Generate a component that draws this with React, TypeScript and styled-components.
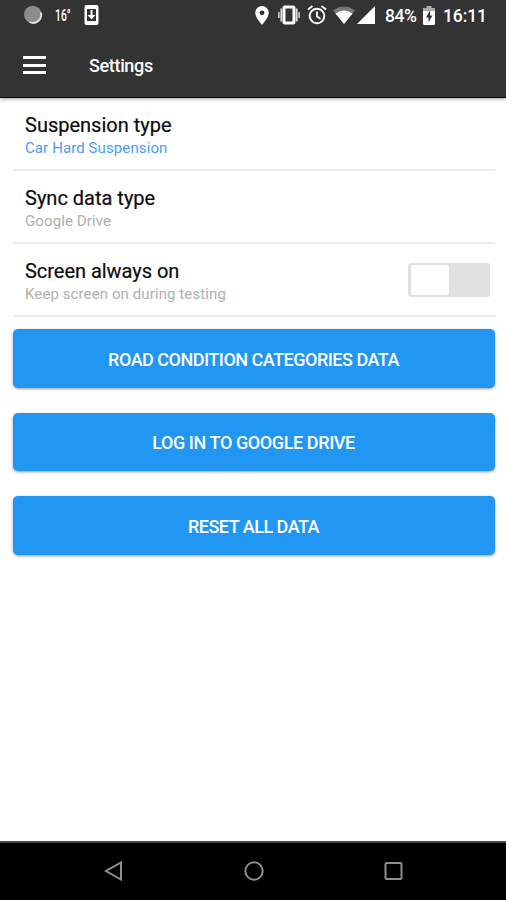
import React from "react";
import styled, { createGlobalStyle } from "styled-components";

const GlobalStyle = createGlobalStyle`
  * { box-sizing: border-box; }
  body { margin: 0; background: #fff; font-family: Roboto, "Liberation Sans", sans-serif; }
`;

const Screen = styled.div`
  width: 506px;
  height: 900px;
  display: flex;
  flex-direction: column;
  background: #fff;
  overflow: hidden;
`;

const TopArea = styled.header`
  flex: none;
  height: 98px;
  background: #333;
  border-bottom: 1.5px solid #0c0c0c;
  box-shadow: 0 1px 4px rgba(0, 0, 0, 0.4);
`;

const StatusBar = styled.div`
  height: 32px;
  display: flex;
  align-items: center;
  justify-content: space-between;
  padding: 0 19px 0 24px;
  color: #fff;
`;

const StatusGroup = styled.div`
  display: flex;
  align-items: center;
  height: 32px;
`;

const StatusIcon = styled.svg<{ $gap?: number }>`
  display: block;
  flex: none;
  margin-bottom: 2px;
  margin-right: ${(p) => p.$gap ?? 0}px;
`;

const Temperature = styled.span`
  width: 16px;
  margin: 0 13px 0 12px;
  font-size: 16px;
  line-height: 32px;
  font-weight: 500;
  white-space: nowrap;
  transform: scaleX(0.65);
  transform-origin: 0 50%;
`;

const StatusText = styled.span<{ $width: number; $spacing: number }>`
  width: ${(p) => p.$width}px;
  font-size: 17.5px;
  line-height: 32px;
  font-weight: 500;
  letter-spacing: ${(p) => p.$spacing}px;
  white-space: nowrap;
`;

const AppBar = styled.div`
  height: 64px;
  display: flex;
  align-items: center;
  padding: 2px 23px 0;
`;

const MenuButton = styled.button`
  width: 23px;
  height: 18px;
  padding: 0;
  border: 0;
  background: none;
  display: flex;
  flex-direction: column;
  justify-content: space-between;
`;

const MenuBar = styled.span`
  height: 3px;
  background: #fff;
`;

const Title = styled.h1`
  margin: 1px 0 0 43px;
  color: #fff;
  font-size: 18px;
  font-weight: 500;
  line-height: 24px;
  letter-spacing: -0.35px;
`;

const Content = styled.main`
  flex: 1;
  padding: 0 11.5px 0 12.5px;
`;

const Row = styled.div<{ $height: number }>`
  height: ${(p) => p.$height}px;
  display: flex;
  align-items: center;
  justify-content: space-between;
  padding: 4px 4.5px 0 12.5px;
  border-bottom: 2px solid #ebebeb;
`;

const RowTitle = styled.div<{ $spacing: number }>`
  font-size: 20px;
  line-height: 24px;
  letter-spacing: ${(p) => p.$spacing}px;
  color: #0c0c0c;
  -webkit-text-stroke: 0.2px #0c0c0c;
`;

const RowValue = styled.div<{ $accent?: boolean; $spacing: number }>`
  font-size: 15px;
  line-height: 22px;
  letter-spacing: ${(p) => p.$spacing}px;
  color: ${(p) => (p.$accent ? "#4a9df0" : "#b0b0b0")};
`;

const Switch = styled.div`
  width: 82px;
  height: 34px;
  padding: 2px 3px;
  margin-top: -3px;
  border-radius: 3px;
  background: #e0e0e0;
`;

const Thumb = styled.div`
  width: 38px;
  height: 30px;
  border-radius: 2px;
  background: #fff;
`;

const Actions = styled.div`
  display: flex;
  flex-direction: column;
  gap: 25px;
  padding-top: 12px;
`;

const ActionButton = styled.button<{ $spacing: number }>`
  width: 482px;
  height: 58.5px;
  padding: 2px 0 0;
  border: 0;
  border-radius: 5px;
  background: #2196f3;
  box-shadow: 0 1px 3px rgba(0, 0, 0, 0.4);
  color: #fff;
  font-family: inherit;
  font-size: 18px;
  font-weight: 500;
  letter-spacing: ${(p) => p.$spacing}px;
`;

const NavBar = styled.nav`
  flex: none;
  height: 59px;
  display: flex;
  justify-content: space-between;
  align-items: center;
  padding: 0 103px 2px 104px;
  background: #000;
  border-top: 2px solid #484848;
`;

function DiscIcon() {
  return (
    <StatusIcon width="19" height="20" viewBox="0 0 19 20" $gap={0}>
      <circle cx="8.8" cy="9.5" r="8.8" fill="#8c8c8c" />
      <path d="M16.8 7.5A8 8 0 0 1 5.5 17" fill="none" stroke="#e4e4e4" strokeWidth="1.8" />
    </StatusIcon>
  );
}

function DownloadIcon() {
  return (
    <StatusIcon width="16" height="20" viewBox="0 0 16 20">
      <rect x=".5" width="14" height="20" rx="2" fill="#fff" />
      <path d="M3 4h9v12H3z" fill="#333" />
      <path d="M6.5 5h2v5h3l-4 4.5-4-4.5h3z" fill="#fff" />
    </StatusIcon>
  );
}

function PinIcon() {
  return (
    <StatusIcon width="14" height="19" viewBox="0 0 14 19" $gap={9}>
      <path d="M7 0a6.8 6.8 0 0 0-6.8 6.8C.2 11.5 7 19 7 19s6.8-7.5 6.8-12.2A6.8 6.8 0 0 0 7 0zm0 4.4a2.4 2.4 0 1 1 0 4.8 2.4 2.4 0 0 1 0-4.8z" fill="#fff" fillRule="evenodd" />
    </StatusIcon>
  );
}

function VibrateIcon() {
  return (
    <StatusIcon width="22" height="20" viewBox="0 0 22 20" $gap={7}>
      <rect x="6" y="2" width="10" height="16" rx="1" fill="none" stroke="#fff" strokeWidth="3" />
      <path d="M3.3 3.5v13M18.7 3.5v13" stroke="#ddd" strokeWidth="1.8" />
      <path d="M.9 7v6M21.1 7v6" stroke="#ccc" strokeWidth="1.6" />
    </StatusIcon>
  );
}

function AlarmIcon() {
  return (
    <StatusIcon width="20" height="20" viewBox="0 0 20 20" $gap={6}>
      <circle cx="10" cy="11" r="7.3" fill="none" stroke="#fff" strokeWidth="2" />
      <path d="M10 6.5v5l3.5 2.2M1 4.5 5.5 1M19 4.5 14.5 1" fill="none" stroke="#fff" strokeWidth="1.8" />
    </StatusIcon>
  );
}

function WifiIcon() {
  return (
    <StatusIcon width="22" height="18" viewBox="0 0 22 18" $gap={2}>
      <path d="M0 4.5Q11-3.5 22 4.5L11 18z" fill="#777" />
      <path d="M2.5 7.500Q11 1.500 19.500 7.500L11 18z" fill="#fff" />
    </StatusIcon>
  );
}

function SignalIcon() {
  return (
    <StatusIcon width="18" height="18" viewBox="0 0 18 18" $gap={10}>
      <path d="M18 0v18H0z" fill="#fff" />
    </StatusIcon>
  );
}

function BatteryIcon() {
  return (
    <StatusIcon width="12" height="19" viewBox="0 0 12 19" $gap={8}>
      <path d="M3.5 0h5v2H12v5H0V2h3.5z" fill="#aaa" />
      <path d="M0 5h12v12.500q0 1.500-1.500 1.500h-9Q0 19 0 17.500z" fill="#fff" />
      <path d="M7 4.500 3 11.500h2.500V16.500L9.500 9.500H7z" fill="#333" />
    </StatusIcon>
  );
}

const actions = [
  { label: "ROAD CONDITION CATEGORIES DATA", spacing: -0.5 },
  { label: "LOG IN TO GOOGLE DRIVE", spacing: -0.4 },
  { label: "RESET ALL DATA", spacing: -0.5 },
];

export default function App() {
  return (
    <Screen>
      <GlobalStyle />
      <TopArea>
        <StatusBar>
          <StatusGroup>
            <DiscIcon />
            <Temperature>16°</Temperature>
            <DownloadIcon />
          </StatusGroup>
          <StatusGroup>
            <PinIcon />
            <VibrateIcon />
            <AlarmIcon />
            <WifiIcon />
            <SignalIcon />
            <StatusText $width={38} $spacing={-0.4}>84%</StatusText>
            <BatteryIcon />
            <StatusText $width={44} $spacing={-0.1}>16:11</StatusText>
          </StatusGroup>
        </StatusBar>
        <AppBar>
          <MenuButton aria-label="Menu">
            <MenuBar />
            <MenuBar />
            <MenuBar />
          </MenuButton>
          <Title>Settings</Title>
        </AppBar>
      </TopArea>
      <Content>
        <Row $height={73}>
          <div>
            <RowTitle $spacing={0}>Suspension type</RowTitle>
            <RowValue $accent $spacing={0.1}>Car Hard Suspension</RowValue>
          </div>
        </Row>
        <Row $height={73}>
          <div>
            <RowTitle $spacing={0}>Sync data type</RowTitle>
            <RowValue $spacing={0.1}>Google Drive</RowValue>
          </div>
        </Row>
        <Row $height={73}>
          <div>
            <RowTitle $spacing={-0.03}>Screen always on</RowTitle>
            <RowValue $spacing={0.1}>Keep screen on during testing</RowValue>
          </div>
          <Switch role="switch" aria-checked={false}>
            <Thumb />
          </Switch>
        </Row>
        <Actions>
          {actions.map((a) => (
            <ActionButton key={a.label} $spacing={a.spacing}>{a.label}</ActionButton>
          ))}
        </Actions>
      </Content>
      <NavBar>
        <svg width="19" height="20" viewBox="0 0 19 20">
          <path d="M17 1.5v17L2 10z" fill="none" stroke="#8e8e8e" strokeWidth="2" />
        </svg>
        <svg width="20" height="20" viewBox="0 0 20 20">
          <circle cx="10" cy="10" r="8.7" fill="none" stroke="#8e8e8e" strokeWidth="2" />
        </svg>
        <svg width="19" height="20" viewBox="0 0 19 20">
          <rect x="1.5" y="2" width="16" height="16" rx="1" fill="none" stroke="#8e8e8e" strokeWidth="2" />
        </svg>
      </NavBar>
    </Screen>
  );
}
